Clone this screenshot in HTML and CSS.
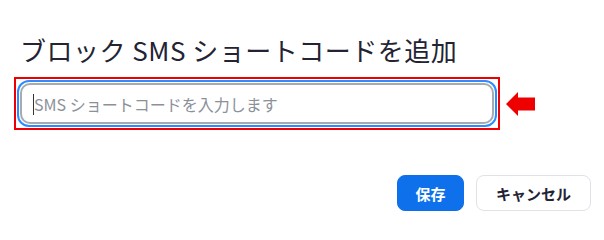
FILE: index.html
```html
<!DOCTYPE html>
<html lang="ja">
<head>
<meta charset="utf-8">
<title>ブロック SMS ショートコードを追加</title>
<link rel="stylesheet" href="styles.css">
</head>
<body>
<div class="dialog">
  <h1 class="title">ブロック SMS ショートコードを追加</h1>
  <div class="field-row">
    <div class="highlight">
      <div class="field">
        <input class="input" type="text" placeholder="SMS ショートコードを入力します">
        <span class="caret"></span>
      </div>
    </div>
    <svg class="arrow" width="30" height="26" viewBox="0 0 30 26" aria-hidden="true">
      <path d="M0 13 L12 1 L12 6.5 L29 6.5 L29 19.5 L12 19.5 L12 25 Z" fill="#ee0000"/>
    </svg>
  </div>
  <div class="actions">
    <button class="btn btn-primary" type="button">保存</button>
    <button class="btn btn-default" type="button">キャンセル</button>
  </div>
</div>
</body>
</html>
```

FILE: styles.css
```css
html, body {
  margin: 0;
  padding: 0;
  background: #ffffff;
}

body {
  font-family: "Noto Sans CJK JP", "Noto Sans", sans-serif;
  color: #232333;
}

.dialog {
  width: 604px;
  height: 227px;
  box-sizing: border-box;
  padding: 32px 13px 0 14px;
  display: flex;
  flex-direction: column;
}

.title {
  margin: 0 0 9px 6px;
  font-size: 26px;
  letter-spacing: 0.5px;
  font-weight: 400;
  line-height: 36px;
  color: #232333;
  white-space: nowrap;
}

.field-row {
  display: flex;
  align-items: center;
  gap: 6px;
}

.highlight {
  width: 486px;
  box-sizing: border-box;
  border: 2px solid #ee0000;
  padding: 1px;
}

.field {
  position: relative;
  border: 2px solid #2d8cff;
  border-radius: 12px;
  padding: 1px;
}

.input {
  display: block;
  width: 100%;
  height: 41px;
  box-sizing: border-box;
  border: 2px solid #a6aab1;
  border-radius: 10px;
  padding: 0 12px;
  margin: 0;
  font-family: "Noto Sans CJK JP", "Noto Sans", sans-serif;
  font-size: 16px;
  color: #232333;
  background: #ffffff;
  outline: none;
  caret-color: transparent;
}

.input::placeholder {
  color: #8c9099;
  opacity: 1;
}

.caret {
  position: absolute;
  left: 14px;
  top: 12px;
  width: 1px;
  height: 21px;
  background: #333333;
}

.arrow {
  display: block;
  margin-top: 1px;
}

.actions {
  margin-top: 45px;
  display: flex;
  justify-content: flex-end;
  gap: 12px;
}

.btn {
  height: 36px;
  box-sizing: border-box;
  border-radius: 8px;
  font-family: "Noto Sans CJK JP", "Noto Sans", sans-serif;
  font-size: 15px;
  font-weight: 700;
  line-height: 1;
  margin: 0;
  cursor: pointer;
}

.btn-primary {
  width: 67px;
  padding: 0;
  background: #0e71eb;
  border: 1px solid #0e71eb;
  color: #ffffff;
}

.btn-default {
  width: 115px;
  padding: 0;
  background: #ffffff;
  border: 1px solid #dfe3e8;
  color: #232333;
}
```
